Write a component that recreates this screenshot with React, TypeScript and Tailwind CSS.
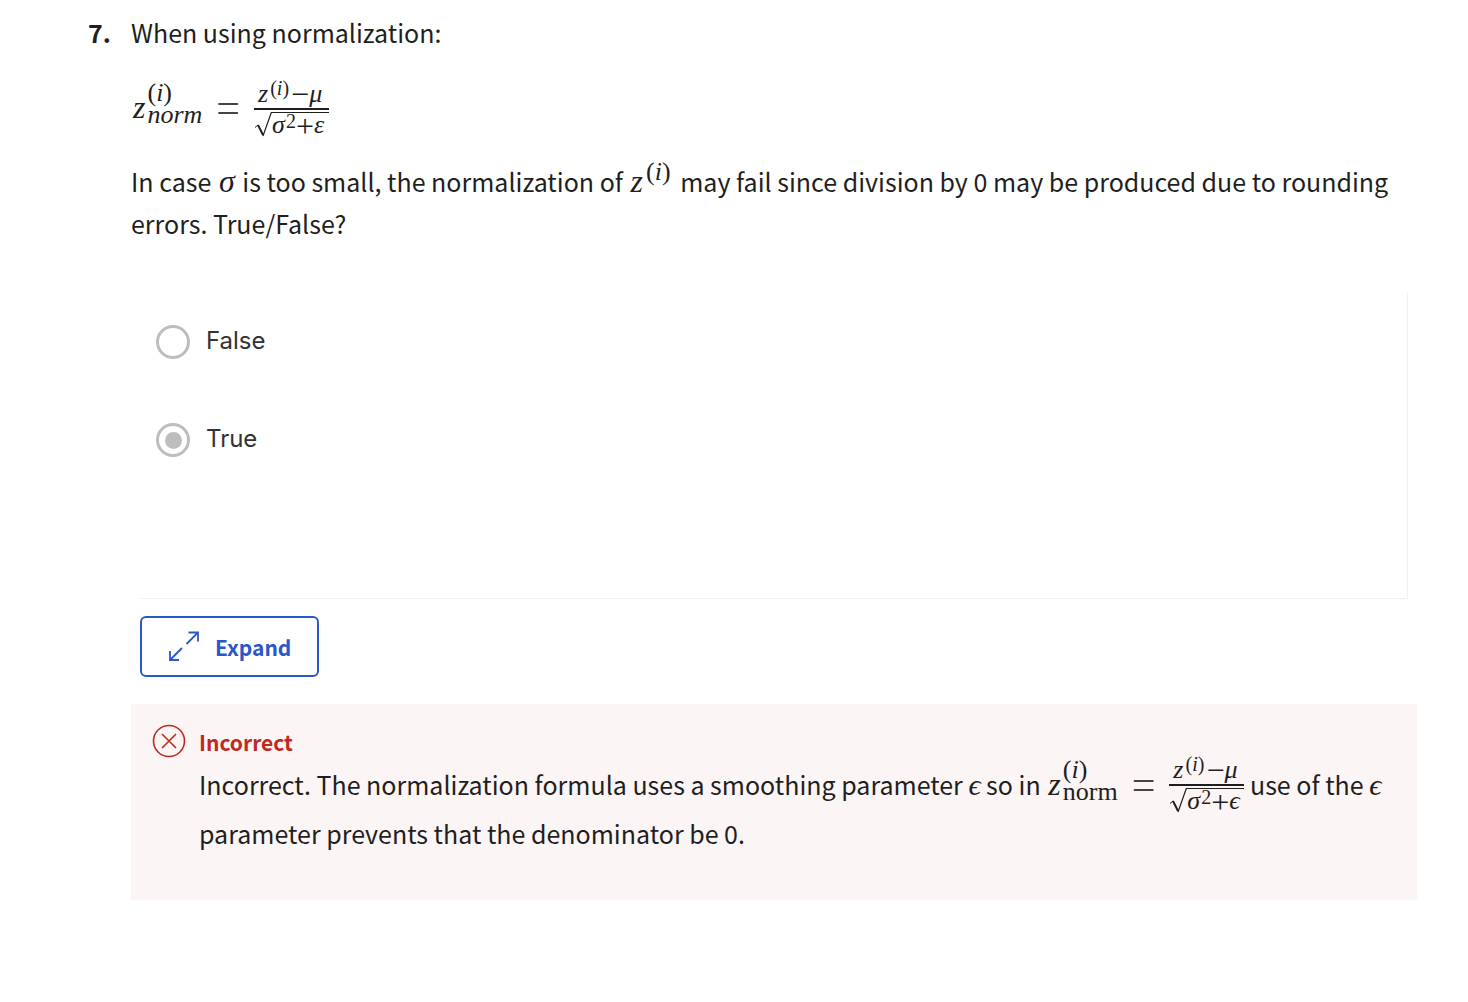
import React, { useState } from "react";

const Var = ({ children, className = "px-0.5 text-[32px]" }: { children: React.ReactNode; className?: string }) => (
  <i className={`font-['Liberation_Serif',serif] leading-none ${className}`}>{children}</i>
);

const Sup = ({ className = "" }: { className?: string }) => (
  <span className={`font-['Liberation_Serif',serif] leading-none ${className}`}>
    (<i>i</i>)
  </span>
);

function Fraction({ epsilon }: { epsilon: string }) {
  return (
    <span className="inline-flex w-[75px] flex-col text-[26px] leading-none">
      <span className="flex h-[30px] items-end border-b-2 border-[#1f1f1f] pb-0.5 pl-1">
        <i className="leading-[24px]">z</i>
        <Sup className="pb-2 pl-0.5 text-[20px]" />
        <span className="pl-0.5 text-[32px] leading-[24px]">−</span>
        <i className="leading-[24px]">μ</i>
      </span>
      <span className="flex pt-0.5">
        <svg className="h-[25px] w-[18px] shrink-0" viewBox="0 0 18 25" fill="none" stroke="#1f1f1f" aria-hidden="true">
          <path d="M1 15.5 4 13" strokeWidth="1" />
          <path d="m4 13 5 10" strokeWidth="2" />
          <path d="M9 24 17.3 0.5H18" strokeWidth="1.2" />
        </svg>
        <span className="flex h-[25px] grow items-end border-t border-[#1f1f1f]">
          <i className="leading-[24px]">σ</i>
          <span className="pb-1.5 pl-px text-[20px]">2</span>
          <span className="text-[32px] leading-[22px]">+</span>
          <i className="leading-[24px]">{epsilon}</i>
        </span>
      </span>
    </span>
  );
}

function Formula({ roman = false, epsilon }: { roman?: boolean; epsilon: string }) {
  return (
    <span className="inline-flex h-[48px] items-center whitespace-nowrap font-['Liberation_Serif',serif] leading-none">
      <span className="pb-0.5">
        <Var>z</Var>
      </span>
      <span className="inline-flex flex-col pb-2 text-[26px]">
        <Sup className="h-[22px] text-[26px]" />
        <span className={roman ? "" : "italic"}>norm</span>
      </span>
      <span className="px-3.5 text-[42px] text-[#444]">=</span>
      <Fraction epsilon={epsilon} />
    </span>
  );
}

function Option({ label, checked, onChange }: { label: string; checked: boolean; onChange: () => void }) {
  return (
    <label className="flex items-center gap-4 font-[Inter,sans-serif] text-[24px] leading-[32px] text-[#333]">
      <input
        type="radio"
        name="answer"
        checked={checked}
        onChange={onChange}
        className="m-0 grid size-[34px] appearance-none place-items-center rounded-full border-[3px] border-[#bdbdbd] bg-white before:size-[17px] before:rounded-full checked:before:bg-[#bdbdbd]"
      />
      <span className="pb-0.5">{label}</span>
    </label>
  );
}

export default function App() {
  const [answer, setAnswer] = useState("True");
  return (
    <main className="flex min-h-screen bg-white pl-[88px] pr-[51px] pt-[11px] font-['Noto_Sans_CJK_SC',sans-serif] text-[25px] leading-[42px] text-[#1f1f1f]">
      <div className="w-[43px] shrink-0 font-bold">7.</div>
      <div className="min-w-0 grow">
        <p>When using normalization:</p>
        <p className="mt-[31px] flex">
          <Formula epsilon="ε" />
        </p>
        <p className="mt-7">
          In case <Var>σ</Var> is too small, the normalization of <Var>z</Var>
          <Sup className="relative -top-3 pr-1 pl-px text-[26px]" /> may fail since division by 0 may be produced due to
          rounding errors. True/False?
        </p>
        <fieldset className="ml-2 mr-[9px] mt-12 flex h-[307px] flex-col gap-16 border-b border-r border-[#f2f2f2] pl-[17px] pt-[33px]">
          {["False", "True"].map((label) => (
            <Option key={label} label={label} checked={answer === label} onChange={() => setAnswer(label)} />
          ))}
        </fieldset>
        <button className="ml-[9px] mt-[17px] flex h-[61px] items-center gap-[15px] rounded-md border-2 border-[#2a57ca] px-[26px] text-[21px] font-bold text-[#2a57ca]">
          <svg className="size-8" viewBox="0 0 32 32" fill="none" stroke="currentColor" strokeWidth="1.8" aria-hidden="true">
            <path d="M18.5 13 29.5 2M20.5 1.5H30V10.5M14 17 2.5 28.5M2 20V29H11" />
          </svg>
          Expand
        </button>
        <section className="mt-[27px] flex h-[196px] gap-[13px] bg-[#fbf5f5] pl-[21px] pr-6 pt-5">
          <svg className="size-[34px] shrink-0" viewBox="0 0 34 34" fill="none" stroke="#c1291f" strokeWidth="1.6" aria-hidden="true">
            <circle cx="17" cy="17" r="15.5" />
            <path d="m10 10 14 14M24 10 10 24" />
          </svg>
          <div className="grow">
            <h2 className="text-[21px] font-bold leading-[36px] text-[#c1291f]">Incorrect</h2>
            <p className="mt-[3px]">
              Incorrect. The normalization formula uses a smoothing parameter{" "}
              <Var className="text-[30px]">ϵ</Var> so in{" "}
              <span className="-mt-1 mb-[3px] inline-flex align-middle">
                <Formula roman epsilon="ϵ" />
              </span>{" "}
              use of the <Var className="text-[30px]">ϵ</Var> parameter prevents that the denominator be 0.
            </p>
          </div>
        </section>
      </div>
    </main>
  );
}
